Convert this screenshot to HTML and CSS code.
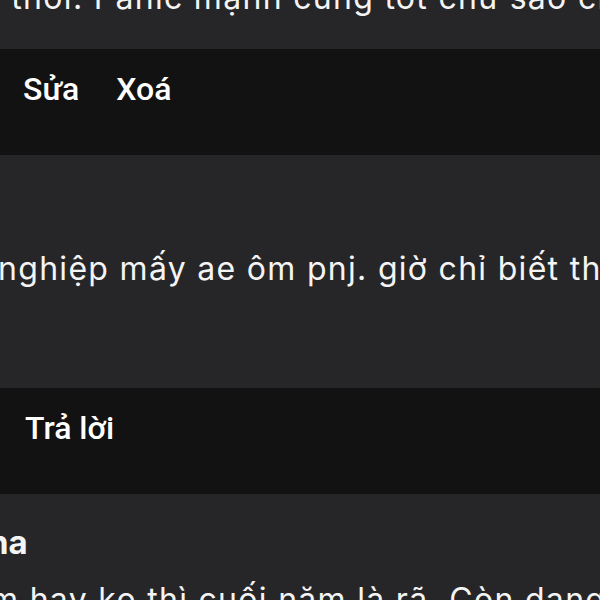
FILE: index.html
```html
<!DOCTYPE html>
<html lang="vi">
<head>
<meta charset="utf-8">
<link rel="stylesheet" href="styles.css">
</head>
<body>
<div class="thread">
  <div class="panel panel-tail">
    <p class="text tail-text">i thôi. Panic mạnh cũng tốt chứ sao chứ</p>
  </div>
  <div class="actions">
    <span class="action">Sửa</span>
    <span class="action">Xoá</span>
  </div>
  <div class="panel panel-mid">
    <p class="text mid-text">nghiệp mấy ae ôm pnj. giờ chỉ biết thôi</p>
  </div>
  <div class="actions">
    <span class="action reply">Trả lời</span>
  </div>
  <div class="panel panel-next">
    <p class="name">na</p>
    <p class="text next-text">m hay ko thì cuối năm là rã. Còn dang</p>
  </div>
</div>
</body>
</html>
```

FILE: styles.css
```css
html, body {
  margin: 0;
  padding: 0;
  background: #262628;
  width: 600px;
  height: 600px;
  overflow: hidden;
}
.thread {
  display: flex;
  flex-direction: column;
  font-family: Inter, "Noto Sans", sans-serif;
  color: #f4f4f5;
}
.panel {
  background: #262628;
  overflow: hidden;
  white-space: nowrap;
}
.text {
  margin: 0;
  font-size: 32px;
  line-height: 36px;
  letter-spacing: 1.3px;
}
.panel-tail {
  height: 49px;
}
.tail-text {
  margin-top: -20px;
  margin-left: -8px;
}
.actions {
  background: #121212;
  height: 106px;
  display: flex;
  gap: 37px;
  padding-left: 23px;
  padding-top: 22px;
  box-sizing: border-box;
  font-family: Roboto, "Liberation Sans", sans-serif;
  font-weight: 500;
  font-size: 32px;
  line-height: 36px;
  color: #ffffff;
}
.reply {
  margin-left: 2px;
}
.panel-mid {
  height: 233px;
  padding-top: 96px;
  box-sizing: border-box;
}
.mid-text {
  margin-left: -2px;
}
.panel-next {
  height: 200px;
  padding-top: 28px;
  box-sizing: border-box;
}
.name {
  margin: 0 0 0 -12px;
  font-size: 33px;
  font-weight: 700;
  line-height: 40px;
}
.next-text {
  margin-top: 20px;
  margin-left: -10px;
}
```
